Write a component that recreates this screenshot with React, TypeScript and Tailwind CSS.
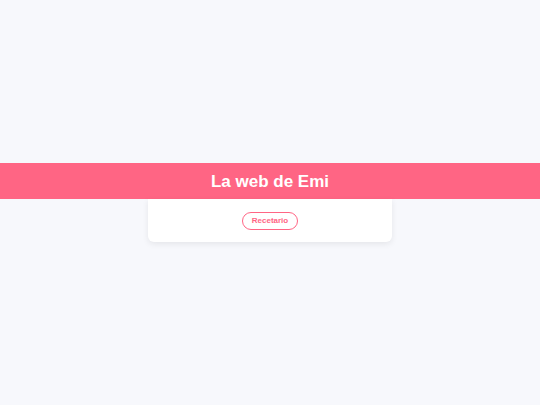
export default function App() {
  return (
    <div className="min-h-screen w-full bg-[#f7f8fc] flex flex-col justify-center items-center" style={{ fontFamily: '"Liberation Sans", Arial, sans-serif' }}>
      <header className="w-full h-[36px] bg-[#ff6584] flex items-center justify-center">
        <h1 className="text-white font-bold text-[17px] leading-none">La web de Emi</h1>
      </header>
      <div className="w-[244px] h-[43px] bg-white rounded-b-md shadow-[0_2px_6px_rgba(0,0,0,0.08)] flex items-center justify-center">
        <button className="h-[18px] px-[9px] rounded-full border border-[#ff6584] text-[#ff6584] font-bold text-[8px] leading-none bg-white">
          Recetario
        </button>
      </div>
    </div>
  );
}
